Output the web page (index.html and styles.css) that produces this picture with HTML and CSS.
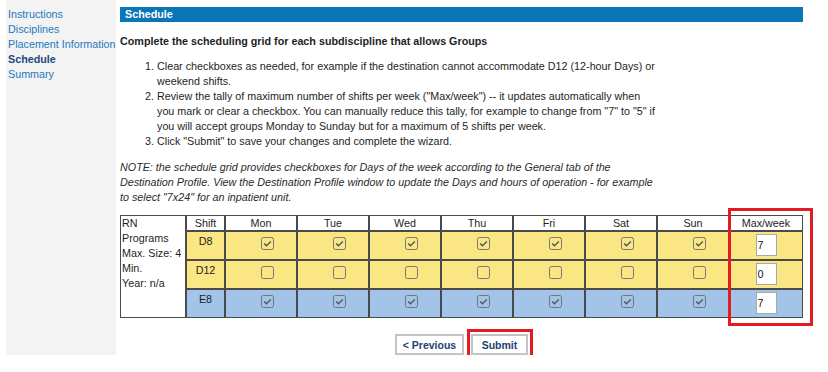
FILE: index.html
```html
<!DOCTYPE html>
<html lang="en">
  <head>
    <meta charset="UTF-8" />
    <title>Schedule</title>
    <link rel="stylesheet" href="styles.css">
  </head>
  <body>
    <div class="page">
      <div class="sidebar">
        <a href="#">Instructions</a>
        <a href="#">Disciplines</a>
        <a href="#">Placement Information</a>
        <a href="#" class="active">Schedule</a>
        <a href="#">Summary</a>
      </div>
      <div class="main">
        <div class="title-bar">Schedule</div>
        <p class="lead">Complete the scheduling grid for each subdiscipline that allows Groups</p>
        <ol class="steps">
          <li>Clear checkboxes as needed, for example if the destination cannot accommodate D12 (12-hour Days) or weekend shifts.</li>
          <li>Review the tally of maximum number of shifts per week ("Max/week") -- it updates automatically when you mark or clear a checkbox. You can manually reduce this tally, for example to change from "7" to "5" if you will accept groups Monday to Sunday but for a maximum of 5 shifts per week.</li>
          <li>Click "Submit" to save your changes and complete the wizard.</li>
        </ol>
        <p class="note">NOTE: the schedule grid provides checkboxes for Days of the week according to the General tab of the Destination Profile. View the Destination Profile window to update the Days and hours of operation - for example to select "7x24" for an inpatient unit.</p>

        <table class="grid">
          <colgroup>
            <col class="c-info">
            <col class="c-shift">
            <col class="c-day"><col class="c-day"><col class="c-day"><col class="c-day">
            <col class="c-day"><col class="c-day"><col class="c-day">
            <col class="c-max">
          </colgroup>
          <tr class="head">
            <td class="info" rowspan="4">RN<br>Programs<br>Max. Size: 4<br>Min.<br>Year: n/a</td>
            <td>Shift</td>
            <td>Mon</td><td>Tue</td><td>Wed</td><td>Thu</td><td>Fri</td><td>Sat</td><td>Sun</td>
            <td>Max/week</td>
          </tr>
          <tr class="day-row yellow" id="row-d8"><td class="shift">D8</td></tr>
          <tr class="day-row yellow" id="row-d12"><td class="shift">D12</td></tr>
          <tr class="day-row blue" id="row-e8"><td class="shift">E8</td></tr>
        </table>

        <div class="actions">
          <button class="btn btn-prev">&lt; Previous</button>
          <button class="btn btn-submit">Submit</button>
        </div>

        <div class="mark mark-max"></div>
        <div class="mark mark-submit"></div>
      </div>
    </div>
    <script>
      var rows = [
        { id: "row-d8", checked: true, max: "7" },
        { id: "row-d12", checked: false, max: "0" },
        { id: "row-e8", checked: true, max: "7" }
      ];

      function checkbox(checked) {
        var svg = '<svg class="cb" width="13" height="13" viewBox="0 0 13 13">' +
          '<rect x="0.5" y="0.5" width="12" height="12" rx="2" fill="none" stroke="#767676"/>';
        if (checked) {
          svg += '<path d="M3.2 6.6 L5.4 8.7 L9.8 4.4" fill="none" stroke="#555" stroke-width="1.4"/>';
        }
        return svg + '</svg>';
      }

      rows.forEach(function (row) {
        var tr = document.getElementById(row.id);
        for (var i = 0; i < 7; i++) {
          var td = document.createElement("td");
          td.className = "day";
          td.innerHTML = checkbox(row.checked);
          tr.appendChild(td);
        }
        var max = document.createElement("td");
        max.className = "max";
        max.innerHTML = '<input type="text" class="max-input" value="' + row.max + '">';
        tr.appendChild(max);
      });
    </script>
  </body>
</html>
```

FILE: styles.css
```css
body {
  margin: 0;
  background: #fff;
  font-family: "Liberation Sans", Arial, sans-serif;
  font-size: 10.75px;
  line-height: 15px;
  color: #1e1e1e;
}
.page {
  display: flex;
  gap: 4px;
  padding: 0 6px;
}
.sidebar {
  width: 110px;
  flex-shrink: 0;
  background-color: #f3f3f3;
  padding: 7px 0 0 2px;
  box-sizing: border-box;
  display: flex;
  flex-direction: column;
}
.sidebar a {
  color: #1f78bd;
  text-decoration: none;
  white-space: nowrap;
}
.sidebar a.active {
  font-weight: bold;
  color: #1c4a7e;
}
.main {
  position: relative;
  width: 683px;
  padding-top: 7px;
}
.title-bar {
  background-color: #0a76b7;
  color: #fff;
  font-weight: bold;
  height: 15px;
  line-height: 15px;
  padding-left: 5px;
}
.lead {
  font-weight: bold;
  margin: 12px 0 0;
}
.steps {
  width: 503px;
  margin: 10px 0 0;
  padding-left: 37px;
}
.note {
  width: 540px;
  margin: 11px 0 0;
  font-style: italic;
  color: #2a2a2a;
}
.grid {
  margin-top: 10px;
  width: 683px;
  table-layout: fixed;
  border-collapse: separate;
  border-spacing: 0;
}
.c-info {
  width: 66px;
}
.c-shift {
  width: 39px;
}
.c-day {
  width: 72px;
}
.c-max {
  width: 74px;
}
.grid td {
  border: 1px solid #4a4a4a;
  padding: 0;
  text-align: center;
  vertical-align: top;
}
.grid .head {
  height: 16px;
}
.grid .head td {
  background-color: #fff;
  line-height: 14px;
}
.grid td.info {
  text-align: left;
  padding: 0 1px;
  line-height: 15px;
  white-space: nowrap;
}
.day-row {
  height: 29px;
}
.yellow td {
  background-color: #fae682;
}
.blue td {
  background-color: #a1c4e8;
}
.grid td.shift {
  padding-top: 2px;
}
.grid td.day {
  padding: 5px 0 0 13px;
}
.cb {
  display: inline-block;
  vertical-align: top;
}
.grid td.max {
  padding-top: 2px;
}
.max-input {
  width: 21px;
  height: 22px;
  box-sizing: border-box;
  border: 1px solid #a8a8a8;
  padding: 0 0 0 1px;
  font-family: "Liberation Sans", Arial, sans-serif;
  font-size: 10.75px;
  color: #111;
  background: #fff;
}
.actions {
  display: flex;
  justify-content: center;
  gap: 7px;
  margin-top: 16px;
}
.btn {
  height: 21px;
  padding: 0;
  background: #fff;
  border: 2px solid #c4c4c4;
  font-family: "Liberation Sans", Arial, sans-serif;
  font-size: 10.5px;
  font-weight: bold;
  color: #1d4270;
  white-space: nowrap;
  cursor: pointer;
}
.btn-prev {
  width: 69px;
}
.btn-submit {
  width: 57px;
}
/* red annotation boxes */
.mark {
  position: absolute;
  border: 3px solid #e31b23;
  box-sizing: border-box;
  pointer-events: none;
}
.mark-max {
  left: 608px;
  top: 208px;
  width: 85px;
  height: 118px;
}
.mark-submit {
  left: 347px;
  top: 329px;
  width: 66px;
  height: 32px;
}
```
